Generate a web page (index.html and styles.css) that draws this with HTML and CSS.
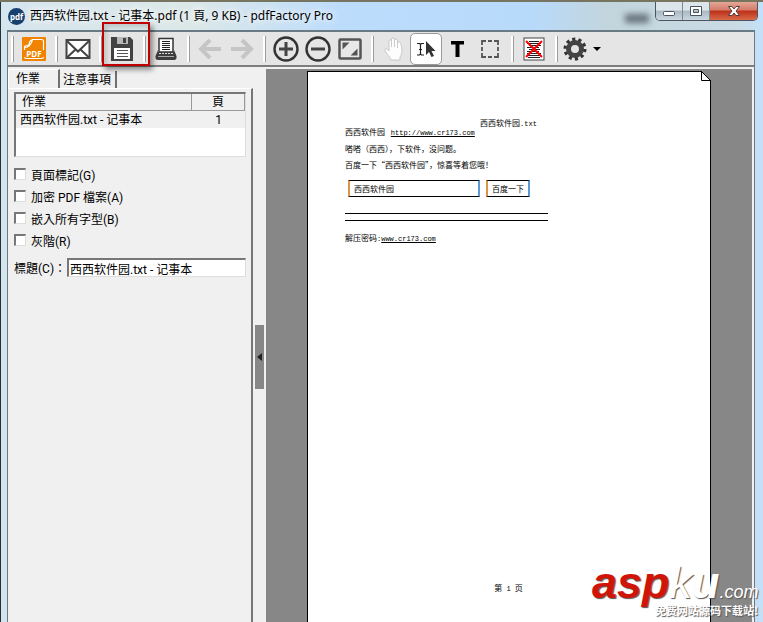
FILE: index.html
```html
<!DOCTYPE html>
<html lang="zh-Hant">
<head>
  <meta charset="UTF-8" />
  <title>pdfFactory Pro</title>
  <meta name="viewport" content="width=device-width, initial-scale=1" />
  <link rel="stylesheet" href="styles.css">
</head>
<body>
  <div class="window">
    <header class="titlebar">
      <svg class="app-icon" width="17" height="17" viewBox="0 0 17 17">
        <circle cx="8.500" cy="8.500" r="8.500" fill="#17406f" />
        <text x="8.500" y="11.500" text-anchor="middle" class="app-icon-text">pdf</text>
      </svg>
      <h1 class="title">西西软件园.txt - 记事本.pdf (1 頁, 9 KB) - pdfFactory Pro</h1>
      <div class="title-blur"></div>
      <div class="win-buttons">
        <button type="button" class="win-btn" aria-label="最小化">
          <svg width="14" height="12" viewBox="0 0 14 12"><rect x="1.500" y="6.500" width="11" height="4" rx="1" fill="#fff" stroke="#4a5360" /></svg>
        </button>
        <button type="button" class="win-btn" aria-label="最大化">
          <svg width="14" height="12" viewBox="0 0 14 12"><path d="M1.500 1.500h11v9h-11zM4.500 4.500v3h5v-3z" fill="#fff" fill-rule="evenodd" stroke="#4a5360" /></svg>
        </button>
        <button type="button" class="win-btn win-close" aria-label="關閉">
          <svg width="14" height="12" viewBox="0 0 14 12"><path d="M1.500 1.500h3.500l2 2.500 2-2.500h3.500l-3.500 4.500 3.500 4.500h-3.500l-2-2.500-2 2.500h-3.500l3.500-4.500z" fill="#fff" stroke="#5b3a3a" /></svg>
        </button>
      </div>
    </header>

    <div class="client">
      <div class="toolbar">
        <span class="sep"></span>
        <button type="button" class="tool" aria-label="PDF">
          <svg width="24" height="24" viewBox="0 0 24 24">
            <rect width="24" height="24" rx="1" fill="#f08300" />
            <path d="M2.500 13V9.500Q4 8 7 8Q7 4 10.500 2.500H19.500Q21.500 2.500 21.500 4.500V13M3 10.500C7 10 9 8 10.500 3M2.500 20Q2.500 21.500 4.500 21.500H19.500Q21.500 21.500 21.500 20" fill="none" stroke="#fff" stroke-width="1.200" />
            <text x="12" y="20" text-anchor="middle" class="pdf-text">PDF</text>
          </svg>
        </button>
        <span class="sep"></span>
        <button type="button" class="tool" aria-label="郵件">
          <svg width="26" height="22" viewBox="0 0 26 22">
            <rect x="1.500" y="2" width="23" height="18" fill="#fff" stroke="#444" stroke-width="2" />
            <path d="M2 3l11 10.500L24 3M2 19.500l8.500-8M24 19.500l-8.500-8" fill="none" stroke="#444" stroke-width="2" />
          </svg>
        </button>
        <span class="sep"></span>
        <button type="button" class="tool save" aria-label="儲存">
          <svg width="22" height="24" viewBox="0 0 22 24">
            <path d="M0 0H19L22 3V24H0z" fill="#434343" />
            <path d="M6 0H17V7H6z" fill="#b8b8b8" /><path d="M12 1h3v5h-3z" fill="#434343" />
            <path d="M3 11H19V22H3z" fill="#fff" />
            <path d="M6 13.500H17M6 16.500H17M6 19.500H17" stroke="#555" />
          </svg>
        </button>
        <span class="sep"></span>
        <button type="button" class="tool" aria-label="列印">
          <svg width="22" height="24" viewBox="0 0 22 24">
            <path d="M4 1.500H18V15H4z" fill="#fff" stroke="#333" stroke-width="1.500" />
            <path d="M7 4.500H15M7 6.500H15M7 8.500H15M7 10.500H15M7 12.500H15" stroke="#222" />
            <path d="M3 13L0.500 19V21Q0.500 23 3 23H19Q21.500 23 21.500 21V19L19 13V15H3z" fill="#3d3d3d" />
            <path d="M4 16.500H18" stroke="#ddd" stroke-dasharray="2 1" /><path d="M3 19.500H19" stroke="#aaa" />
          </svg>
        </button>
        <span class="sep"></span>
        <button type="button" class="tool" aria-label="上一步" disabled>
          <svg width="24" height="20" viewBox="0 0 24 20"><path d="M12 1L3 10l9 9M3 10H23" fill="none" stroke="#c5c5c5" stroke-width="4" /></svg>
        </button>
        <button type="button" class="tool" aria-label="下一步" disabled>
          <svg width="24" height="20" viewBox="0 0 24 20"><path d="M12 1l9 9-9 9M21 10H1" fill="none" stroke="#c5c5c5" stroke-width="4" /></svg>
        </button>
        <span class="sep"></span>
        <button type="button" class="tool" aria-label="放大">
          <svg width="26" height="26" viewBox="0 0 26 26"><circle cx="13" cy="13" r="11.500" fill="none" stroke="#333" stroke-width="2.400" /><path d="M6 13H20M13 6V20" stroke="#444" stroke-width="3" /></svg>
        </button>
        <button type="button" class="tool" aria-label="縮小">
          <svg width="26" height="26" viewBox="0 0 26 26"><circle cx="13" cy="13" r="11.500" fill="none" stroke="#333" stroke-width="2.400" /><path d="M6 13H20" stroke="#444" stroke-width="3" /></svg>
        </button>
        <button type="button" class="tool" aria-label="符合頁面">
          <svg width="24" height="22" viewBox="0 0 24 22"><rect x="1.500" y="1.500" width="21" height="19" rx="1" fill="#e8e8e8" stroke="#555" stroke-width="2.500" /><path d="M4.500 4.500h7l-7 7zM19.500 17.500h-7l7-7z" fill="#555" /></svg>
        </button>
        <span class="sep"></span>
        <button type="button" class="tool" aria-label="手形工具">
          <svg width="20" height="26" viewBox="0 0 20 26"><path d="M7 24C6 20 1 17 1 13.500C1 12 3 12 5 15V5C5 3.500 7.500 3.500 7.500 5V11V3C7.500 1.500 10.500 1.500 10.500 3V11V4C10.500 2.500 13.500 2.500 13.500 4V12V7C13.500 5.500 16.500 5.500 16.500 7.500C19 12 18 19 16 21V24z" fill="#fdfdfd" stroke="#c9c9c9" /></svg>
        </button>
        <button type="button" class="tool tool-active" aria-label="選取">
          <svg width="20" height="18" viewBox="0 0 20 18">
            <path d="M1 3.500H3.500L4.500 4.500L5.500 3.500H8M4.500 4V14.500M1 15H3.500L4.500 14L5.500 15H8M3 9.500H6" fill="none" stroke="#222" stroke-width="1.200" />
            <path d="M10 1V15L13 12L15.500 17L18 16L15.500 11H19.500z" fill="#333" />
          </svg>
        </button>
        <button type="button" class="tool" aria-label="文字">
          <svg width="14" height="16" viewBox="0 0 14 16"><path d="M0 0H13V3.500H8.500V16H4.500V3.500H0z" fill="#000" /></svg>
        </button>
        <button type="button" class="tool" aria-label="框選">
          <svg width="18" height="18" viewBox="0 0 18 18"><path d="M1 5V1H5M7 1H11M13 1H17V5M17 7V11M17 13V17H13M11 17H7M5 17H1V13M1 11V7" fill="none" stroke="#555" stroke-width="1.800" /></svg>
        </button>
        <span class="sep"></span>
        <button type="button" class="tool" aria-label="刪除頁面">
          <svg width="22" height="24" viewBox="0 0 22 24">
            <rect x="1" y="1" width="20" height="22" fill="#fff" stroke="#444" />
            <path d="M6 4.500H16M4 6.500H18M6 8.500H18M4 10.500H16M6 12.500H17M4 14.500H16M4 16.500H18M4 18.500H18M5 20.500H17" stroke="#222" />
            <path d="M3 4L19 20M19 4L3 20" stroke="#f00" stroke-width="2" />
          </svg>
        </button>
        <span class="sep"></span>
        <button type="button" class="tool tool-menu" aria-label="設定">
          <svg width="24" height="24" viewBox="0 0 24 24">
            <circle cx="12" cy="12" r="9.500" fill="none" stroke="#333" stroke-width="4" stroke-dasharray="3 2.969" />
            <circle cx="12" cy="12" r="6.500" fill="none" stroke="#444" stroke-width="5" />
          </svg>
          <svg width="8" height="4" viewBox="0 0 8 4"><path d="M0 0H8L4 4z" fill="#000" /></svg>
        </button>
      </div>

      <main class="main">
        <section class="side">
          <div class="tabs">
            <button type="button" class="tab tab-on">作業</button>
            <button type="button" class="tab">注意事項</button>
          </div>
          <div class="panel">
            <div class="list">
              <table class="jobs">
                <thead>
                  <tr><th>作業</th><th class="pages">頁</th></tr>
                </thead>
                <tbody>
                  <tr><td>西西软件园.txt - 记事本</td><td class="pages">1</td></tr>
                </tbody>
              </table>
            </div>
            <div class="options">
              <label class="check"><input type="checkbox" />頁面標記(G)</label>
              <label class="check"><input type="checkbox" />加密 PDF 檔案(A)</label>
              <label class="check"><input type="checkbox" />嵌入所有字型(B)</label>
              <label class="check"><input type="checkbox" />灰階(R)</label>
            </div>
            <div class="field">
              <label for="docTitle">標題(C)：</label>
              <input type="text" id="docTitle" value="西西软件园.txt - 记事本" />
            </div>
          </div>
        </section>

        <div class="splitter">
          <button type="button" class="grip" aria-label="收合">
            <svg width="5" height="8" viewBox="0 0 5 8"><path d="M5 0V8L0 4z" fill="#222" /></svg>
          </button>
        </div>

        <section class="preview">
          <article class="sheet" lang="zh-Hans">
            <svg class="fold" width="10" height="10" viewBox="0 0 10 10"><path d="M0 0H10V10z" fill="#878787" /><path d="M0.500 0V9.500H10M0.500 0.500L9.500 9.500" fill="none" stroke="#000" /></svg>
            <p class="doc-name">西西软件园<span class="mono">.txt</span></p>
            <p class="line">西西软件园 <a class="mono link" href="#">http://www.cr173.com</a></p>
            <p class="line">嗒嗒（西西），下软件，没问题。</p>
            <p class="line">百度一下“西西软件园”，惊喜等着您哦！</p>
            <div class="search">
              <span class="frame frame-wide">西西软件园</span>
              <span class="frame">百度一下</span>
            </div>
            <div class="rules"></div>
            <p class="line">解压密码<span class="mono">:</span><a class="mono link" href="#">www.cr173.com</a></p>
            <p class="page-no">第<span class="mono"> 1 </span>页</p>
          </article>
        </section>
      </main>
    </div>

    <div class="highlight"></div>
    <div class="watermark" lang="zh-Hans">
      <div class="brand"><span class="asp">asp</span><span class="k">k</span><span class="u">u</span><span class="com">.com</span></div>
      <div class="slogan">免费网站源码下载站!</div>
    </div>
  </div>
</body>
</html>
```

FILE: styles.css
```css
* {
  box-sizing: border-box;
}

body {
  margin: 0;
  font-family: Roboto, "Noto Sans CJK SC", sans-serif;
  font-size: 12px;
  color: #000;
}

button {
  border: none;
  padding: 0;
  background: none;
  font: inherit;
  color: inherit;
}

svg {
  display: block;
  flex: none;
}

.window {
  position: relative;
  display: flex;
  flex-direction: column;
  min-height: 100vh;
  overflow: hidden;
  padding: 0 8px 0 7px;
  border-top: 2px solid #77745f;
  background: linear-gradient(90deg, #d5e5ee 0, #dce8e8 25%, #bcdcfc 45%, #b8dafa 70%, #c3d5dc 80%, #cadbe6 97%, #c3e0fa 100%);
  box-shadow: inset 1px 0 #26313a;
}

/* title bar */
.titlebar {
  display: flex;
  align-items: center;
  height: 28px;
}

.app-icon {
  margin-left: 1px;
}

.app-icon-text {
  font: bold 8px "Open Sans", sans-serif;
  fill: #fff;
}

.title {
  margin: 0 0 0 5px;
  font-family: "Noto Sans", "Noto Sans CJK SC", sans-serif;
  font-size: 12px;
  font-weight: 400;
  line-height: 18px;
  white-space: nowrap;
  text-shadow: 0 0 6px #fff, 0 0 8px #fff;
}

.title-blur {
  width: 24px;
  height: 9px;
  margin: 4px 6px 0 auto;
  background: #66727b;
  filter: blur(3px);
}

.win-buttons {
  display: flex;
  align-self: flex-start;
  height: 19px;
  margin-right: -3px;
  border: 1px solid #4c5560;
  border-top: none;
  border-radius: 0 0 5px 5px;
  overflow: hidden;
}

.win-btn {
  display: flex;
  align-items: center;
  justify-content: center;
  width: 27px;
  border-right: 1px solid #7d8890;
  background: linear-gradient(#dce5ea 0 45%, #aab8c1 50%, #c9d8e0);
}

.win-close {
  width: 47px;
  border-right: none;
  background: linear-gradient(#e4a797 0, #d37a68 45%, #bb3018 50%, #d9694a);
}

.client {
  display: flex;
  flex: 1;
  flex-direction: column;
  border: 1px solid #6a7a85;
  border-width: 2px 1px 0;
  background: #f0f0f0;
}

/* toolbar */
.toolbar {
  display: flex;
  align-items: center;
  height: 35px;
  border-bottom: 2px solid #7d7d7d;
  background: #e5e5e5;
}

.sep {
  flex: none;
  width: 12px;
  height: 26px;
  border-right: 4px solid transparent;
  background: linear-gradient(90deg, transparent 5px, #fff 5px 7px, #9c9c9c 7px) padding-box;
}

.sep:first-child {
  width: 10px;
  background: linear-gradient(90deg, transparent 3px, #fff 3px 5px, #9c9c9c 5px) padding-box;
}

.tool {
  display: flex;
  flex: none;
  align-items: center;
  justify-content: center;
  width: 32px;
  height: 32px;
}

.tool-active {
  border: 1px solid #999;
  border-radius: 5px;
  background: #fff;
}

.tool-menu {
  gap: 6px;
  width: 40px;
}

.pdf-text {
  font: bold 8px "Open Sans", sans-serif;
  fill: #fff;
}

.main {
  display: flex;
  flex: 1;
}

/* left side */
.side {
  display: flex;
  flex: none;
  flex-direction: column;
  width: 245px;
  padding-top: 2px;
}

.tabs {
  display: flex;
  align-items: flex-end;
  height: 19px;
}

.tab {
  height: 17px;
  padding: 0 4px 0 3px;
  border-right: 2px solid #707070;
  line-height: 16px;
}

.tab-on {
  width: 52px;
  height: 19px;
  padding: 0 20px 0 7px;
  border-top: 1px solid #fff;
  border-left: 1px solid #fff;
  white-space: nowrap;
}

.panel {
  flex: 1;
  padding: 3px 5px 0 6px;
  border-top: 1px solid #fff;
  border-right: 2px solid #777;
}

.list {
  height: 65px;
  border: 2px solid #777;
  border-right: 1px solid #ddd;
  border-bottom: 1px solid #ddd;
  background: #fff;
}

.jobs {
  width: 100%;
  border-collapse: separate;
  border-spacing: 0;
  line-height: 16px;
}

.jobs th {
  height: 17px;
  padding: 0 6px;
  border-right: 1px solid #999;
  border-bottom: 1px solid #999;
  background: #f0f0f0;
  font-weight: 400;
  text-align: left;
}

.jobs td {
  height: 17px;
  padding: 0 4px;
  background: #f0f0f0;
}

.jobs .pages {
  width: 53px;
  text-align: center;
}

.options {
  padding-top: 6px;
}

.check {
  display: flex;
  align-items: center;
  gap: 5px;
  height: 22px;
}

.check input {
  width: 12px;
  height: 12px;
  margin: 0;
  border: 1px solid #ddd;
  border-top: 2px solid #777;
  border-left: 2px solid #777;
  background: #fff;
  appearance: none;
}

.field {
  display: flex;
  align-items: center;
  margin-top: 7px;
}

.field label {
  width: 53px;
  white-space: nowrap;
}

.field input {
  flex: 1;
  min-width: 0;
  height: 19px;
  padding: 0 1px;
  border: 1px solid #ddd;
  border-top: 2px solid #777;
  border-left: 2px solid #777;
  background: #fff;
  font: inherit;
}

.splitter {
  flex: none;
  width: 13px;
  padding: 258px 2px 0;
}

.grip {
  display: flex;
  align-items: center;
  justify-content: center;
  width: 9px;
  height: 64px;
  background: #878787;
}

/* preview */
.preview {
  display: flex;
  flex: 1;
  justify-content: center;
  min-width: 0;
  margin: 2px 2px 0 0;
  padding-top: 2px;
  background: #878787;
}

.sheet {
  position: relative;
  display: flex;
  flex-direction: column;
  width: 404px;
  padding: 47px 38px 0 37px;
  border: 1px solid #000;
  border-bottom: none;
  background: #fff;
  font-family: "Noto Sans CJK SC", sans-serif;
  font-size: 8px;
  line-height: 8px;
}

.fold {
  position: absolute;
  top: -1px;
  right: -1px;
}

.sheet p {
  margin: 0;
}

.mono {
  font-family: "Liberation Mono", monospace;
  font-size: 7px;
}

.link {
  margin-left: 4px;
  color: #000;
}

.mono + .link {
  margin-left: 0;
}

.doc-name {
  align-self: center;
}

.sheet .line {
  margin-bottom: 8px;
}

.search {
  display: flex;
  gap: 6px;
  margin-top: 3px;
  padding-left: 3px;
}

.frame {
  height: 17px;
  padding: 0 4px;
  border: 1px solid #000;
  border-right: 2px solid #5b9bd5;
  border-left: 2px solid #d9954a;
  line-height: 15px;
}

.frame-wide {
  width: 132px;
}

.rules {
  width: 203px;
  height: 8px;
  margin: 16px 0 13px;
  border: 1px solid #000;
  border-width: 1px 0;
}

.sheet .page-no {
  margin-top: 333px;
  text-align: center;
  white-space: pre;
}

/* red box round the save button */
.highlight {
  position: absolute;
  top: 20px;
  left: 102px;
  width: 48px;
  height: 44px;
  border: 2px solid #c00000;
  box-shadow: 3px 4px 5px rgba(0, 0, 0, 0.4), inset 3px 3px 5px rgba(0, 0, 0, 0.15);
  pointer-events: none;
}

.watermark {
  position: absolute;
  right: 5px;
  bottom: 5px;
  width: 166px;
  color: #fff;
  text-shadow: 1px 1px 1px #555;
}

.brand {
  font: italic bold 45px/46px "Liberation Sans", sans-serif;
  white-space: nowrap;
}

.asp {
  color: #d01408;
}

.k {
  font-weight: 400;
}

.com {
  font-size: 18px;
  font-weight: 400;
}

.slogan {
  margin-top: -12px;
  font: bold 11px/14px "Noto Sans CJK SC", sans-serif;
  text-align: right;
  white-space: nowrap;
}
```
